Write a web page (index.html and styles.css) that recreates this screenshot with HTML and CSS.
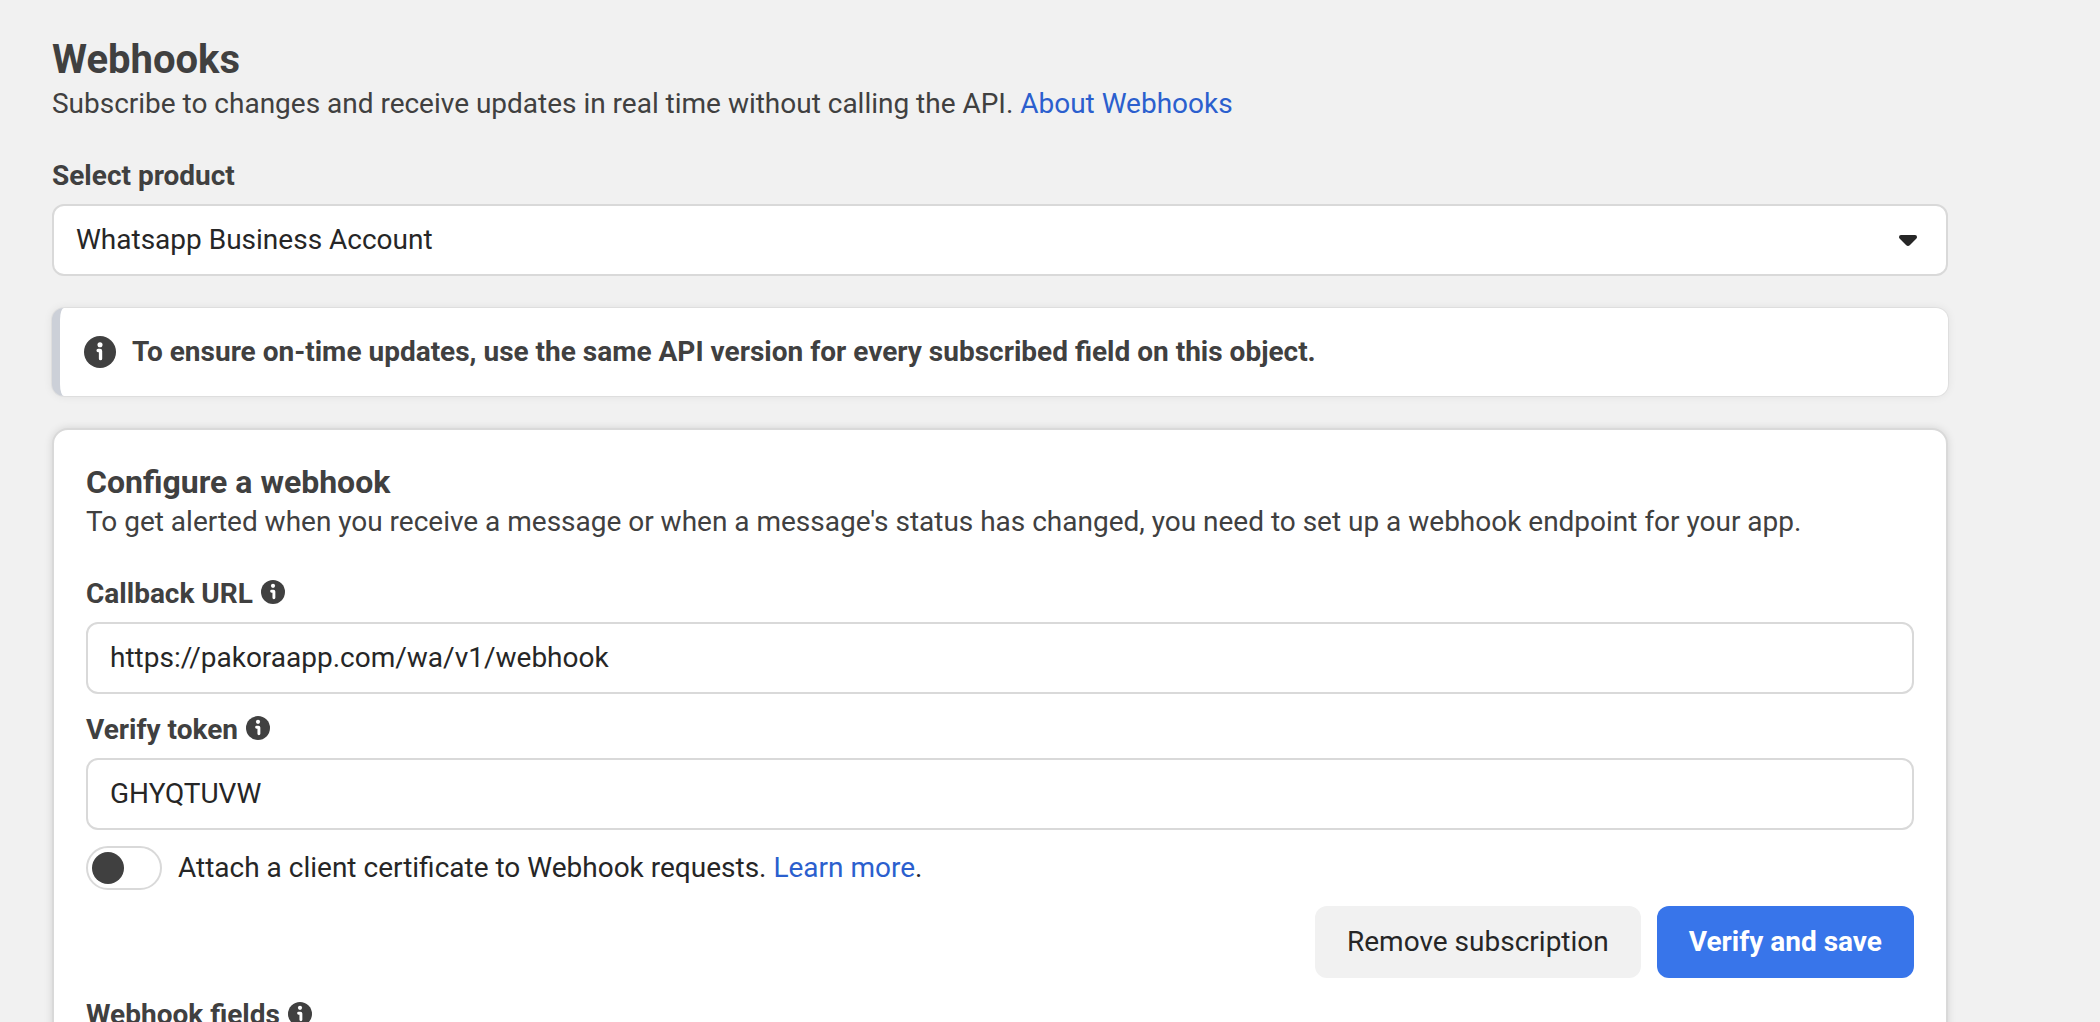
FILE: index.html
```
<!DOCTYPE html>
<html lang="en">
<head>
    <meta charset="UTF-8">
    <meta name="viewport" content="width=device-width, initial-scale=1.0">
    <title>Webhooks</title>
    <link rel="stylesheet" href="styles.css">
</head>
<body>
    <svg class="sprite" width="0" height="0">
        <symbol id="info" viewBox="0 0 24 24">
            <circle cx="12" cy="12" r="12" fill="#404040"/>
            <circle cx="12" cy="6.6" r="1.9" fill="#fff"/>
            <path d="M10.600 10.900h1.400q.4 0 .4.4v5.700" fill="none" stroke="#fff" stroke-width="2.5" stroke-linecap="round" stroke-linejoin="round"/>
        </symbol>
        <symbol id="info-small" viewBox="0 0 24 24">
            <circle cx="12" cy="12" r="12" fill="#404040"/>
            <circle cx="12" cy="5.8" r="2.1" fill="#fff"/>
            <path d="M10.600 11.200h1.900q.4 0 .4.4v6.200" fill="none" stroke="#fff" stroke-width="2.900" stroke-linecap="round" stroke-linejoin="round"/>
        </symbol>
    </svg>
    <div class="page">
        <h1>Webhooks</h1>
        <p class="subtitle">Subscribe to changes and receive updates in real time without calling the API. <a href="#">About Webhooks</a></p>

        <div class="label product-label">Select product</div>
        <div class="select">
            <span>Whatsapp Business Account</span>
            <svg class="caret" viewBox="0 0 18 11"><path d="M2 0h14q2 0 2 2 0 1-.8 1.800l-6.200 6.200q-2 2-4 0l-6.200-6.200q-.8-.8-.8-1.800 0-2 2-2z" fill="#262626"/></svg>
        </div>

        <div class="notice">
            <svg class="icon-large"><use href="#info"/></svg>
            <span>To ensure on-time updates, use the same API version for every subscribed field on this object.</span>
        </div>

        <div class="card">
            <h2>Configure a webhook</h2>
            <p class="description">To get alerted when you receive a message or when a message's status has changed, you need to set up a webhook endpoint for your app.</p>

            <div class="label callback-label"><label for="callback">Callback URL</label><svg class="icon"><use href="#info-small"/></svg></div>
            <input type="text" id="callback" value="https://pakoraapp.com/wa/v1/webhook">

            <div class="label token-label"><label for="token">Verify token</label><svg class="icon"><use href="#info-small"/></svg></div>
            <input type="text" id="token" value="GHYQTUVW">

            <div class="certificate">
                <div class="toggle"><div class="knob"></div></div>
                <span>Attach a client certificate to Webhook requests. <a href="#">Learn more</a>.</span>
            </div>

            <div class="buttons">
                <button type="button">Remove subscription</button>
                <button type="button" class="primary">Verify and save</button>
            </div>

            <div class="label fields-label"><span>Webhook fields</span><svg class="icon"><use href="#info-small"/></svg></div>
        </div>
    </div>
</body>
</html>
```

FILE: styles.css
```
* {
    box-sizing: border-box;
}
body {
    font-family: Roboto, sans-serif;
    font-size: 28px;
    line-height: 40px;
    background-color: #f1f1f1;
    color: #262626;
    height: 100vh;
    margin: 0;
    overflow: hidden;
}
.sprite {
    display: block;
}
.page {
    width: 1948px;
    padding: 36px 0 0 52px;
}
h1, h2, p {
    margin: 0;
    color: #404040;
}
h1 {
    font-size: 40px;
    line-height: 48px;
}
h2 {
    font-size: 32px;
    line-height: 40px;
}
p {
    letter-spacing: -0.01px;
}
a {
    color: #2b5fce;
    text-decoration: none;
}
a:hover {
    text-decoration: underline;
}
.label {
    display: flex;
    align-items: center;
    gap: 8px;
    font-weight: bold;
    color: #404040;
}
.product-label {
    margin-top: 32px;
}
.icon {
    width: 24px;
    height: 24px;
    margin-top: -4px;
}
.icon-large {
    width: 32px;
    height: 32px;
}
.select, input {
    width: 100%;
    height: 72px;
    border: 2px solid #d9d9d9;
    border-radius: 12px;
    background-color: white;
}
.select {
    display: flex;
    align-items: center;
    justify-content: space-between;
    margin-top: 8px;
    padding: 0 29px 0 22px;
}
.caret {
    width: 18px;
    height: 11px;
}
.notice {
    display: flex;
    align-items: center;
    gap: 16px;
    height: 88px;
    margin-top: 32px;
    padding-left: 24px;
    border-left: 8px solid #ccd0d8;
    border-radius: 12px;
    background-color: white;
    box-shadow: 0 0 0 1px rgba(0, 0, 0, 0.04), 0 0 10px rgba(0, 0, 0, 0.08);
    font-weight: bold;
    color: #404040;
}
.card {
    height: 700px;
    margin-top: 32px;
    padding: 32px;
    border: 2px solid #d9d9d9;
    border-radius: 16px;
    background-color: white;
    box-shadow: 0 0 8px rgba(0, 0, 0, 0.12);
}
.callback-label {
    margin-top: 32px;
}
.token-label {
    margin-top: 16px;
}
input {
    display: block;
    margin-top: 8px;
    padding: 0 22px 2px;
    font: inherit;
    color: #262626;
}
.certificate {
    display: flex;
    align-items: center;
    gap: 16px;
    margin-top: 16px;
}
.toggle {
    width: 76px;
    height: 44px;
    padding: 4px;
    border: 2px solid #d9d9d9;
    border-radius: 22px;
}
.knob {
    width: 32px;
    height: 32px;
    border-radius: 50%;
    background-color: #404040;
}
.buttons {
    display: flex;
    justify-content: flex-end;
    gap: 16px;
    margin-top: 16px;
}
button {
    height: 72px;
    padding: 0 32px;
    border: none;
    border-radius: 12px;
    background-color: #f1f1f1;
    color: #262626;
    font: inherit;
    cursor: pointer;
}
button.primary {
    background-color: #3875ea;
    color: white;
    font-weight: bold;
}
.fields-label {
    margin-top: 17px;
}
.fields-label .icon {
    margin-top: -2px;
}
```
